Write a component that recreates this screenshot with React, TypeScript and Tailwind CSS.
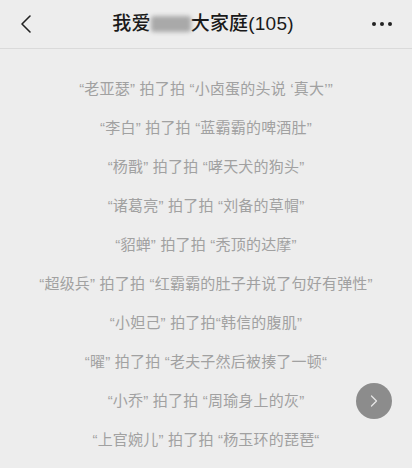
import { ChevronLeft, ChevronRight } from "lucide-react";

const pats = [
  "“老亚瑟” 拍了拍 “小卤蛋的头说 ‘真大’”",
  "“李白” 拍了拍 “蓝霸霸的啤酒肚”",
  "“杨戬” 拍了拍 “哮天犬的狗头”",
  "“诸葛亮” 拍了拍 “刘备的草帽”",
  "“貂蝉” 拍了拍 “秃顶的达摩”",
  "“超级兵” 拍了拍 “红霸霸的肚子并说了句好有弹性”",
  "“小妲己” 拍了拍“韩信的腹肌”",
  "“曜” 拍了拍 “老夫子然后被揍了一顿“",
  "“小乔” 拍了拍 “周瑜身上的灰”",
  "“上官婉儿” 拍了拍 “杨玉环的琵琶“",
];

export default function App() {
  return (
    <div
      className="w-[412px] h-[468px] overflow-hidden bg-[#ededed] relative"
      style={{ fontFamily: '"Liberation Sans", "Noto Sans CJK SC", sans-serif' }}
    >
      {/* Header */}
      <header className="h-[49px] grid grid-cols-[1fr_auto_1fr] items-center px-[10px] border-b border-[#dadada]">
        <ChevronLeft size={32} strokeWidth={1.2} className="text-[#222]" />
        <h1 className="flex items-center text-[19px] font-medium text-[#1a1a1a] mr-[6px] tracking-[0.2px]">
          我爱
          <span className="inline-block w-[40px] h-[16px] bg-[#a9a9a9] rounded-[3px] blur-[2px]" />
          大家庭(105)
        </h1>
        <div className="flex items-center justify-end gap-[4px] pr-[10px]">
          <span className="w-[4px] h-[4px] rounded-full bg-[#222]" />
          <span className="w-[4px] h-[4px] rounded-full bg-[#222]" />
          <span className="w-[4px] h-[4px] rounded-full bg-[#222]" />
        </div>
      </header>

      {/* Pat messages */}
      <div className="flex flex-col items-center pt-[20px]">
        {pats.map((p) => (
          <p key={p} className="h-[39px] leading-[39px] text-[15px] text-[#a1a1a1] whitespace-pre tracking-[0.2px]">
            {p}
          </p>
        ))}
      </div>

      {/* Next button */}
      <button className="absolute left-[356px] top-[383px] w-[36px] h-[36px] rounded-full bg-[#8c8c8c] flex items-center justify-center">
        <ChevronRight size={20} strokeWidth={1.5} className="text-[#e6e6e6]" />
      </button>
    </div>
  );
}
